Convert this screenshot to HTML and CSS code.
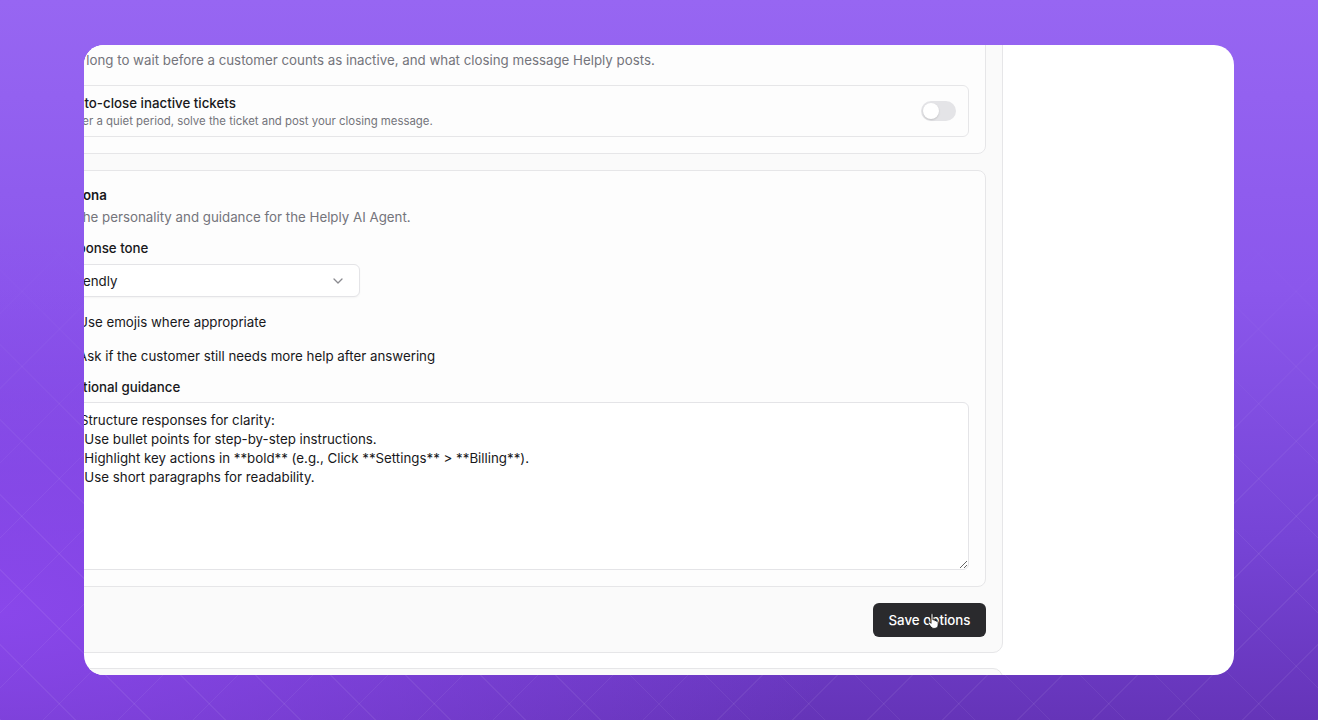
FILE: index.html
```html
<!DOCTYPE html>
<html lang="en">
  <head>
    <meta charset="UTF-8" />
    <meta name="viewport" content="width=device-width, initial-scale=1.0" />
    <title>Helply – Options</title>

    <link rel="stylesheet" href="styles.css">
  </head>
  <body>
    <div class="frame">
      <div class="panel">
        <section class="card">
          <h3 class="card-title">Inactive tickets</h3>
          <p class="card-desc">How long to wait before a customer counts as inactive, and what closing message Helply posts.</p>
          <div class="toggle-row">
            <div>
              <div class="row-title">Auto-close inactive tickets</div>
              <div class="row-desc">After a quiet period, solve the ticket and post your closing message.</div>
            </div>
            <span class="switch"><span class="knob"></span></span>
          </div>
        </section>

        <section class="card">
          <h3 class="card-title">Persona</h3>
          <p class="card-desc">Set the personality and guidance for the Helply AI Agent.</p>

          <div class="field tone-field">
            <label class="field-label">Response tone</label>
            <div class="select">
              <span>Friendly</span>
              <svg width="10" height="6" viewBox="0 0 10 6">
                <path d="M1 1l4 4 4-4" fill="none" stroke="#8a8a8f" stroke-width="1.3" stroke-linecap="round" stroke-linejoin="round" />
              </svg>
            </div>
          </div>

          <label class="check first-check"><span class="box"></span>Use emojis where appropriate</label>
          <label class="check"><span class="box"></span>Ask if the customer still needs more help after answering</label>

          <div class="field guidance-field">
            <label class="field-label">Additional guidance</label>
            <textarea class="guidance">1. Structure responses for clarity:
  - Use bullet points for step-by-step instructions.
  - Highlight key actions in **bold** (e.g., Click **Settings** &gt; **Billing**).
  - Use short paragraphs for readability.</textarea>
          </div>
        </section>

        <div class="panel-footer">
          <button class="save-btn">
            Save options
            <svg class="cursor" width="13" height="16" viewBox="0 0 13 16">
              <path d="M4 1.6a1 1 0 0 1 2 0V7l.4-.2a1 1 0 0 1 1.5.7v.3a1 1 0 0 1 1.6.5 1 1 0 0 1 1.7.7V12c0 2-1.5 3.4-3.4 3.4H6.6c-1.2 0-2-.6-2.7-1.5L1.4 10.5a1 1 0 0 1 1.5-1.3L4 10.3z" fill="#fff" stroke="#111" stroke-width="0.9" stroke-linejoin="round" />
            </svg>
          </button>
        </div>
      </div>

      <div class="panel panel-next"></div>
    </div>
  </body>
</html>
```

FILE: styles.css
```css
* {
  box-sizing: border-box;
}

body {
  margin: 0;
  height: 720px;
  overflow: hidden;
  position: relative;
  font-family: Inter, "Noto Sans", sans-serif;
  color: #18181b;
  background:
    radial-gradient(ellipse at 0% 85%, rgba(140, 72, 238, 0.9) 0%, rgba(140, 72, 238, 0) 45%),
    linear-gradient(to bottom, #9766f2 0%, #8b57ec 40%, #7644d6 75%, #6534b8 100%);
}

/* faint diamond pattern in the lower part of the backdrop */
body::before {
  content: "";
  position: absolute;
  inset: 0;
  background:
    repeating-linear-gradient(45deg, rgba(255, 255, 255, 0.06) 0 1px, transparent 1px 53px),
    repeating-linear-gradient(-45deg, rgba(255, 255, 255, 0.06) 0 1px, transparent 1px 53px);
  -webkit-mask-image: linear-gradient(to bottom, transparent 30%, #000 75%);
  mask-image: linear-gradient(to bottom, transparent 30%, #000 75%);
}

.frame {
  position: relative;
  width: 1150px;
  height: 630px;
  margin: 45px 0 0 84px;
  background: #fff;
  border-radius: 20px;
  overflow: hidden;
}

.panel {
  width: 983px;
  margin: -49px 0 0 -64px;
  padding: 16px 16px 15px;
  display: flex;
  flex-direction: column;
  gap: 16px;
  background: #fafafa;
  border: 1px solid #e6e6e8;
  border-radius: 10px;
}

.panel-next {
  height: 90px;
  margin-top: 15px;
}

.card {
  padding: 16px;
  background: #fdfdfd;
  border: 1px solid #e6e6e8;
  border-radius: 8px;
}

.card-title {
  margin: 0;
  font-size: 13.3px;
  line-height: 16px;
  font-weight: 600;
}

.card-desc {
  margin: 4px 0 0;
  font-size: 13.3px;
  line-height: 20px;
  color: #74747b;
}

.toggle-row {
  margin-top: 15px;
  padding: 7px 12px;
  display: flex;
  align-items: center;
  justify-content: space-between;
  border: 1px solid #e6e6e8;
  border-radius: 6px;
}

.row-title {
  font-size: 13.3px;
  line-height: 20px;
  font-weight: 500;
}

.row-desc {
  font-size: 11.4px;
  line-height: 16px;
  color: #74747b;
}

.switch {
  width: 35px;
  height: 20px;
  padding: 2px;
  border-radius: 10px;
  background: #e4e4e7;
  display: flex;
}

.knob {
  width: 16px;
  height: 16px;
  border-radius: 50%;
  background: #fff;
  box-shadow: 0 1px 2px rgba(0, 0, 0, 0.15);
}

.field {
  display: flex;
  flex-direction: column;
}

.tone-field {
  margin-top: 11px;
  gap: 6px;
}

.guidance-field {
  margin-top: 11px;
  gap: 5px;
}

.field-label {
  font-size: 13.3px;
  line-height: 20px;
  font-weight: 500;
}

.select {
  width: 306px;
  height: 33px;
  padding: 0 16px 0 12px;
  display: flex;
  align-items: center;
  justify-content: space-between;
  font-size: 13.3px;
  border: 1px solid #e4e4e7;
  border-radius: 6px;
  background: #fff;
  box-shadow: 0 1px 2px rgba(0, 0, 0, 0.04);
}

.check {
  display: flex;
  align-items: center;
  gap: 8px;
  margin-top: 14px;
  font-size: 13.3px;
  line-height: 20px;
}

.first-check {
  margin-top: 15px;
}

.box {
  width: 16px;
  height: 16px;
  border: 1px solid #d4d4d8;
  border-radius: 4px;
  background: #fff;
}

.guidance {
  display: block;
  width: 100%;
  height: 168px;
  padding: 8px 12px;
  font-family: Inter, "Noto Sans", sans-serif;
  font-size: 13.3px;
  line-height: 19px;
  color: #18181b;
  border: 1px solid #e4e4e7;
  border-radius: 6px;
  background: #fff;
  resize: vertical;
  outline: none;
}

.panel-footer {
  display: flex;
  justify-content: flex-end;
}

.save-btn {
  position: relative;
  height: 34px;
  padding: 0 15.5px;
  font-family: Inter, "Noto Sans", sans-serif;
  font-size: 13.3px;
  font-weight: 500;
  color: #fff;
  background: #2a2a2d;
  border: none;
  border-radius: 6px;
}

.cursor {
  position: absolute;
  left: 54px;
  top: 10px;
}
```
